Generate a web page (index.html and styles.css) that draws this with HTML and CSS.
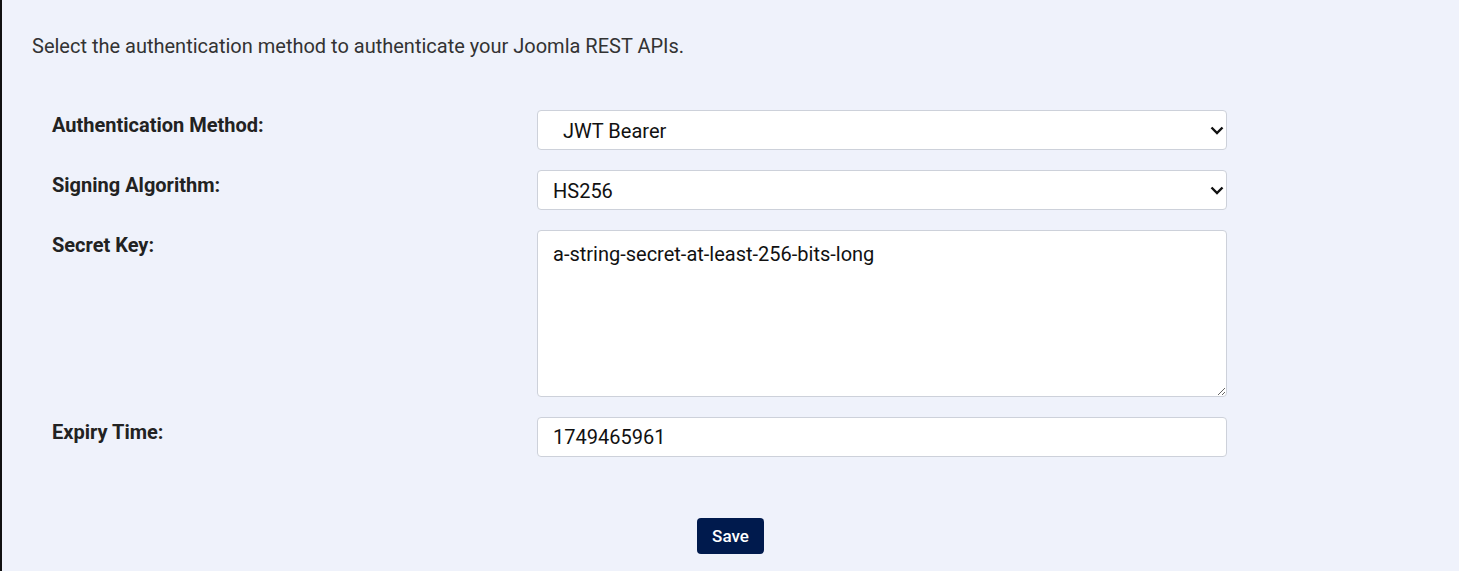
FILE: index.html
```html
<!DOCTYPE html>
<html>
<head>
<meta charset="utf-8">
<link rel="stylesheet" href="styles.css">
</head>
<body>
<div class="page">
  <p class="intro">Select the authentication method to authenticate your Joomla REST APIs.</p>
  <form class="form">
    <div class="row">
      <label class="label">Authentication Method:</label>
      <div class="select-wrap">
        <select class="control select"><option>&nbsp;&nbsp;JWT Bearer</option></select>
        <svg class="chevron" width="14" height="9" viewBox="0 0 14 9"><path d="M1.5 1.5 L7 7 L12.5 1.5" fill="none" stroke="#111" stroke-width="2.4"/></svg>
      </div>
    </div>
    <div class="row">
      <label class="label">Signing Algorithm:</label>
      <div class="select-wrap">
        <select class="control select"><option>HS256</option></select>
        <svg class="chevron" width="14" height="9" viewBox="0 0 14 9"><path d="M1.5 1.5 L7 7 L12.5 1.5" fill="none" stroke="#111" stroke-width="2.4"/></svg>
      </div>
    </div>
    <div class="row">
      <label class="label">Secret Key:</label>
      <textarea class="control textarea">a-string-secret-at-least-256-bits-long</textarea>
    </div>
    <div class="row">
      <label class="label">Expiry Time:</label>
      <input class="control input" type="text" value="1749465961">
    </div>
    <div class="actions">
      <button type="button" class="save">Save</button>
    </div>
  </form>
</div>
</body>
</html>
```

FILE: styles.css
```css
html, body {
  margin: 0;
  padding: 0;
}
body {
  background: #eff2fb;
  border-left: 2px solid #111;
  min-height: 571px;
  box-sizing: border-box;
  font-family: Roboto, "Liberation Sans", sans-serif;
  color: #333;
}
.page {
  padding: 34px 0 0 30px;
}
.intro {
  margin: 0;
  font-size: 20px;
  line-height: 24px;
}
.form {
  margin-top: 52px;
  padding-left: 20px;
  display: flex;
  flex-direction: column;
  gap: 20px;
}
.row {
  display: flex;
  align-items: flex-start;
}
.label {
  width: 485px;
  flex: none;
  font-weight: bold;
  font-size: 20px;
  line-height: 24px;
  padding-top: 3px;
  color: #222;
}
.control {
  width: 690px;
  box-sizing: border-box;
  border: 1px solid #cdd1da;
  border-radius: 4px;
  background: #fff;
  font-family: Roboto, "Liberation Sans", sans-serif;
  font-size: 20px;
  color: #111;
  margin: 0;
}
.select-wrap {
  position: relative;
  width: 690px;
  height: 40px;
}
.select {
  display: block;
  height: 40px;
  padding: 2px 30px 0 15px;
  -webkit-appearance: none;
  appearance: none;
  text-indent: 0;
}
.chevron {
  position: absolute;
  right: 3px;
  top: 16px;
  pointer-events: none;
}
.textarea {
  height: 167px;
  padding: 11px 15px;
  resize: vertical;
  line-height: 24px;
}
.input {
  height: 40px;
  padding: 0 15px;
}
.actions {
  display: flex;
  justify-content: flex-start;
  padding-left: 645px;
  margin-top: 41px;
}
.save {
  width: 67px;
  height: 36px;
  border: none;
  border-radius: 4px;
  background: #001a4d;
  color: #fff;
  font-family: Roboto, "Liberation Sans", sans-serif;
  font-size: 17px;
  font-weight: 500;
  cursor: pointer;
}
```
